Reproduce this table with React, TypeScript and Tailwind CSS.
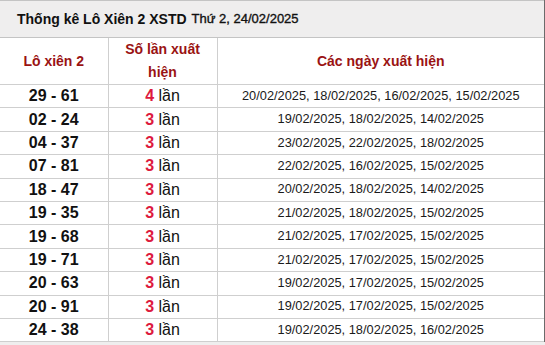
const rows: { pair: string; count: number; dates: string[] }[] = [
    { pair: "29 - 61", count: 4, dates: ["20/02/2025", "18/02/2025", "16/02/2025", "15/02/2025"] },
    { pair: "02 - 24", count: 3, dates: ["19/02/2025", "18/02/2025", "14/02/2025"] },
    { pair: "04 - 37", count: 3, dates: ["23/02/2025", "22/02/2025", "18/02/2025"] },
    { pair: "07 - 81", count: 3, dates: ["22/02/2025", "16/02/2025", "15/02/2025"] },
    { pair: "18 - 47", count: 3, dates: ["20/02/2025", "18/02/2025", "14/02/2025"] },
    { pair: "19 - 35", count: 3, dates: ["21/02/2025", "18/02/2025", "15/02/2025"] },
    { pair: "19 - 68", count: 3, dates: ["21/02/2025", "17/02/2025", "15/02/2025"] },
    { pair: "19 - 71", count: 3, dates: ["21/02/2025", "17/02/2025", "15/02/2025"] },
    { pair: "20 - 63", count: 3, dates: ["19/02/2025", "17/02/2025", "15/02/2025"] },
    { pair: "20 - 91", count: 3, dates: ["19/02/2025", "17/02/2025", "15/02/2025"] },
    { pair: "24 - 38", count: 3, dates: ["19/02/2025", "18/02/2025", "16/02/2025"] },
]

export default function App() {
    return (
        <div className="w-[545px] h-[345px] overflow-hidden bg-[#efeeee] font-['Liberation_Sans',Arial,sans-serif]">
            <div className="w-[545px] border-r border-[#6b6b6b] bg-white">
                {/* Caption */}
                <div className="h-[38px] flex items-center pl-[17px] bg-[#efeeee] border-t border-b border-[#c4c4c4] text-[#111]">
                    <span className="font-bold text-[14px]">Thống kê Lô Xiên 2 XSTD</span>
                    <span className="ml-[5px] text-[13px] [-webkit-text-stroke:0.35px_#111]">Thứ 2, 24/02/2025</span>
                </div>

                <table className="w-[544px] border-collapse table-fixed">
                    <colgroup>
                        <col className="w-[108px]" />
                        <col className="w-[109px]" />
                        <col />
                    </colgroup>
                    <thead>
                        <tr className="h-[46px]">
                            {["Lô xiên 2", "Số lần xuất hiện", "Các ngày xuất hiện"].map((h, i) => (
                                <th
                                    key={h}
                                    className={`text-center align-middle text-[14px] font-bold leading-[23px] text-[#9a1313] border-b border-[#cfcfcf] ${i < 2 ? "border-r" : ""} ${i === 1 ? "px-[12px]" : "px-0"}`}
                                >
                                    {h}
                                </th>
                            ))}
                        </tr>
                    </thead>
                    <tbody>
                        {rows.map(r => (
                            <tr key={r.pair} className="h-[23.4px]">
                                <td className="text-center align-middle p-0 border-r border-b border-[#cfcfcf] text-[16px] font-bold text-[#111] leading-none">
                                    {r.pair}
                                </td>
                                <td className="text-center align-middle p-0 border-r border-b border-[#cfcfcf] text-[16px] text-[#111] leading-none">
                                    <span className="font-bold text-[#dd1a3e]">{r.count}</span> lần
                                </td>
                                <td className="text-center align-middle p-0 border-b border-[#cfcfcf] text-[12.8px] text-[#1a1a1a] leading-none">
                                    {r.dates.join(", ")}
                                </td>
                            </tr>
                        ))}
                    </tbody>
                </table>
            </div>
        </div>
    )
}
